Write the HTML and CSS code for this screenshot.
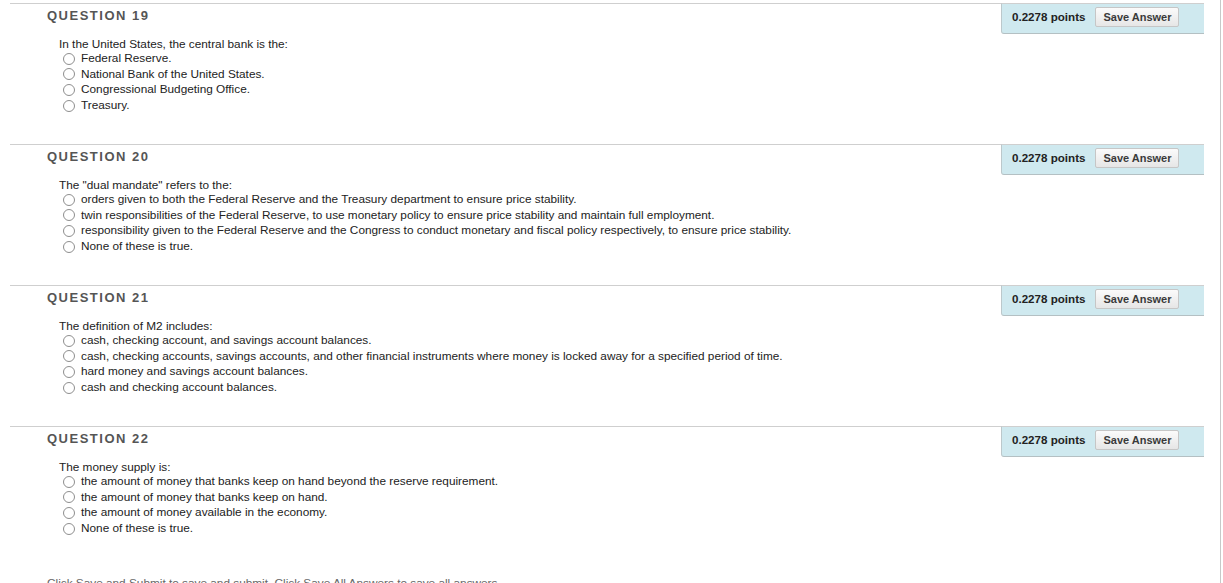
FILE: index.html
```
<!DOCTYPE html>
<html>
<head>
<meta charset="utf-8">
<link rel="stylesheet" href="styles.css">
</head>
<body>
<div class="page">
  <div class="q">
    <div class="q-main">
      <h3 class="q-title">QUESTION 19</h3>
      <div class="q-body">
        <p class="q-text">In the United States, the central bank is the:</p>
        <ul class="opts">
          <li><span class="radio"></span>Federal Reserve.</li>
          <li><span class="radio"></span>National Bank of the United States.</li>
          <li><span class="radio"></span>Congressional Budgeting Office.</li>
          <li><span class="radio"></span>Treasury.</li>
        </ul>
      </div>
    </div>
    <div class="pts"><span class="pts-val">0.2278 points</span><button class="save">Save Answer</button></div>
  </div>
  <div class="q">
    <div class="q-main">
      <h3 class="q-title">QUESTION 20</h3>
      <div class="q-body">
        <p class="q-text">The "dual mandate" refers to the:</p>
        <ul class="opts">
          <li><span class="radio"></span>orders given to both the Federal Reserve and the Treasury department to ensure price stability.</li>
          <li><span class="radio"></span>twin responsibilities of the Federal Reserve, to use monetary policy to ensure price stability and maintain full employment.</li>
          <li><span class="radio"></span>responsibility given to the Federal Reserve and the Congress to conduct monetary and fiscal policy respectively, to ensure price stability.</li>
          <li><span class="radio"></span>None of these is true.</li>
        </ul>
      </div>
    </div>
    <div class="pts"><span class="pts-val">0.2278 points</span><button class="save">Save Answer</button></div>
  </div>
  <div class="q">
    <div class="q-main">
      <h3 class="q-title">QUESTION 21</h3>
      <div class="q-body">
        <p class="q-text">The definition of M2 includes:</p>
        <ul class="opts">
          <li><span class="radio"></span>cash, checking account, and savings account balances.</li>
          <li><span class="radio"></span>cash, checking accounts, savings accounts, and other financial instruments where money is locked away for a specified period of time.</li>
          <li><span class="radio"></span>hard money and savings account balances.</li>
          <li><span class="radio"></span>cash and checking account balances.</li>
        </ul>
      </div>
    </div>
    <div class="pts"><span class="pts-val">0.2278 points</span><button class="save">Save Answer</button></div>
  </div>
  <div class="q">
    <div class="q-main">
      <h3 class="q-title">QUESTION 22</h3>
      <div class="q-body">
        <p class="q-text">The money supply is:</p>
        <ul class="opts">
          <li><span class="radio"></span>the amount of money that banks keep on hand beyond the reserve requirement.</li>
          <li><span class="radio"></span>the amount of money that banks keep on hand.</li>
          <li><span class="radio"></span>the amount of money available in the economy.</li>
          <li><span class="radio"></span>None of these is true.</li>
        </ul>
      </div>
    </div>
    <div class="pts"><span class="pts-val">0.2278 points</span><button class="save">Save Answer</button></div>
  </div>
  <p class="footer-note">Click Save and Submit to save and submit. Click Save All Answers to save all answers.</p>
</div>
</body>
</html>
```
FILE: styles.css
```
html, body {
  margin: 0;
  padding: 0;
  background: #fff;
}
body {
  font-family: "Liberation Sans", Arial, sans-serif;
  color: #222;
  overflow: hidden;
}
.page {
  margin-left: 10px;
  width: 1194px;
  padding-right: 16px;
  padding-top: 3px;
  border-right: 1px solid #c8c8c8;
  height: 580px;
}
.q {
  display: flex;
  height: 141px;
}
.q-main {
  flex: 1;
  border-top: 1px solid #cfcfcf;
  padding-left: 37px;
}
.q-title {
  margin: 0;
  padding-top: 4px;
  font-size: 13px;
  line-height: 16px;
  font-weight: bold;
  letter-spacing: 1.5px;
  color: #555;
}
.q-body {
  padding-left: 12px;
  padding-top: 13px;
}
.q-text {
  margin: 0;
  font-size: 11.8px;
  line-height: 14px;
}
.opts {
  list-style: none;
  margin: 0;
  padding: 0 0 0 4px;
}
.opts li {
  display: flex;
  align-items: center;
  font-size: 11.8px;
  line-height: 15.6px;
}
.radio {
  width: 10px;
  height: 10px;
  border: 1px solid #8e8e8e;
  border-radius: 50%;
  background: #fff;
  margin-right: 6px;
  flex: none;
}
.pts {
  width: 192px;
  height: 26px;
  background: #cfe9ef;
  border-top: 1px solid #cfcfcf;
  border-left: 1px solid #bcc8cb;
  border-bottom: 1px solid #b4c0c3;
  border-bottom-left-radius: 3px;
  display: flex;
  align-items: center;
  padding-left: 10px;
  padding-bottom: 3px;
  box-sizing: content-box;
}
.pts-val {
  font-size: 11.6px;
  font-weight: bold;
  color: #222;
  margin-right: 10px;
  position: relative;
  top: -1px;
}
.save {
  font-family: "Liberation Sans", Arial, sans-serif;
  font-size: 11px;
  font-weight: bold;
  color: #3a3a3a;
  height: 20px;
  width: 84px;
  padding: 0;
  border: 1px solid #c6c6c6;
  border-radius: 2px;
  background: linear-gradient(#fbfbfb, #e6e6e6);
}
.footer-note {
  margin: 0;
  padding-left: 37px;
  font-size: 11.8px;
  color: #666;
  line-height: 15px;
  position: relative;
  top: 9px;
}
```
